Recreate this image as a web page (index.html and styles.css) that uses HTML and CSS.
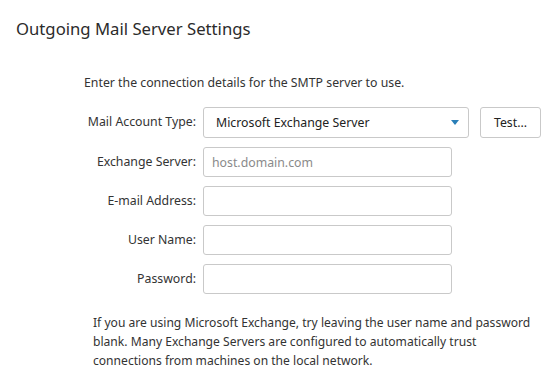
FILE: index.html
```html
<!DOCTYPE html>
<html lang="en">
<head>
    <meta charset="UTF-8">
    <title>Outgoing Mail Server Settings</title>
    <link rel="stylesheet" href="styles.css">
</head>
<body>
<div class="page">
    <h1 class="title">Outgoing Mail Server Settings</h1>
    <p class="intro">Enter the connection details for the SMTP server to use.</p>
    <div class="form">
        <label class="label">Mail Account Type:</label>
        <div class="select-row">
            <div class="select">
                <span>Microsoft Exchange Server</span>
                <svg class="arrow" width="8" height="5" viewBox="0 0 8 5"><path d="M0 0H8L4 5Z" fill="#2a7fb8"/></svg>
            </div>
            <button class="btn">Test...</button>
        </div>
        <label class="label">Exchange Server:</label>
        <input class="field" type="text" placeholder="host.domain.com">
        <label class="label">E-mail Address:</label>
        <input class="field" type="text">
        <label class="label">User Name:</label>
        <input class="field" type="text">
        <label class="label">Password:</label>
        <input class="field" type="password">
    </div>
    <p class="note">If you are using Microsoft Exchange, try leaving the user name and password blank. Many Exchange Servers are configured to automatically trust connections from machines on the local network.</p>
</div>
</body>
</html>
```

FILE: styles.css
```css
body{
    margin: 0;
    background: #fff;
    font-family: "Noto Sans", "Liberation Sans", sans-serif;
    color: #333;
}
.page{
    padding: 17px 0 0 16px;
}
.title{
    margin: 0;
    font-size: 16.7px;
    font-weight: 400;
    line-height: 24px;
    color: #2b2b2b;
}
.intro{
    margin: 33px 0 0 68px;
    font-size: 12.3px;
    line-height: 18px;
}
.form{
    display: grid;
    grid-template-columns: 180px auto;
    justify-content: start;
    column-gap: 7px;
    row-gap: 9px;
    margin-top: 15px;
    align-items: center;
}
.label{
    text-align: right;
    font-size: 12.3px;
    color: #333;
    padding-bottom: 2px;
}
.select-row{
    display: flex;
    gap: 11px;
}
.select{
    box-sizing: border-box;
    width: 266px;
    height: 31px;
    border: 1px solid #c9c9c9;
    border-radius: 3px;
    display: flex;
    align-items: center;
    justify-content: space-between;
    padding: 0 9px 0 12px;
    font-size: 12.3px;
    color: #222;
}
.btn{
    box-sizing: border-box;
    width: 61px;
    height: 31px;
    border: 1px solid #c9c9c9;
    border-radius: 3px;
    background: #fff;
    font-family: inherit;
    font-size: 12.3px;
    color: #222;
    padding: 0;
}
.field{
    box-sizing: border-box;
    width: 249px;
    height: 30px;
    border: 1px solid #c9c9c9;
    border-radius: 3px;
    padding: 0 8px;
    font-family: inherit;
    font-size: 12.3px;
    color: #222;
}
.field::placeholder{
    color: #8a8a8a;
}
.note{
    margin: 19px 16px 0 77px;
    font-size: 12.1px;
    line-height: 19px;
    color: #333;
}
```
